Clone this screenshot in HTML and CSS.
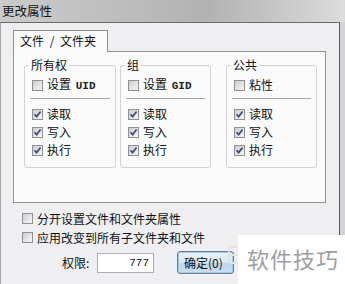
FILE: index.html
```html
<!DOCTYPE html>
<html>
<head>
<meta charset="utf-8">
<link rel="stylesheet" href="styles.css">
</head>
<body>
<div class="screen">
  <div class="titlebar">更改属性</div>
  <div class="window">
    <div class="tabs"><div class="tab">文件 / 文件夹</div></div>
    <div class="panel">
      <fieldset class="group g1">
        <legend>所有权</legend>
        <div class="row"><span class="cb"></span><span>设置 <span class="mono">UID</span></span></div>
        <div class="sep"></div>
        <div class="row"><span class="cb"><svg viewBox="0 0 9 9"><path d="M1.5 4.2 L3.6 6.6 L7.6 1.4"/></svg></span>读取</div>
        <div class="row"><span class="cb"><svg viewBox="0 0 9 9"><path d="M1.5 4.2 L3.6 6.6 L7.6 1.4"/></svg></span>写入</div>
        <div class="row"><span class="cb"><svg viewBox="0 0 9 9"><path d="M1.5 4.2 L3.6 6.6 L7.6 1.4"/></svg></span>执行</div>
      </fieldset>
      <fieldset class="group g2">
        <legend>组</legend>
        <div class="row"><span class="cb"></span><span>设置 <span class="mono">GID</span></span></div>
        <div class="sep"></div>
        <div class="row"><span class="cb"><svg viewBox="0 0 9 9"><path d="M1.5 4.2 L3.6 6.6 L7.6 1.4"/></svg></span>读取</div>
        <div class="row"><span class="cb"><svg viewBox="0 0 9 9"><path d="M1.5 4.2 L3.6 6.6 L7.6 1.4"/></svg></span>写入</div>
        <div class="row"><span class="cb"><svg viewBox="0 0 9 9"><path d="M1.5 4.2 L3.6 6.6 L7.6 1.4"/></svg></span>执行</div>
      </fieldset>
      <fieldset class="group g3">
        <legend>公共</legend>
        <div class="row"><span class="cb"></span><span>粘性</span></div>
        <div class="sep"></div>
        <div class="row"><span class="cb"><svg viewBox="0 0 9 9"><path d="M1.5 4.2 L3.6 6.6 L7.6 1.4"/></svg></span>读取</div>
        <div class="row"><span class="cb"><svg viewBox="0 0 9 9"><path d="M1.5 4.2 L3.6 6.6 L7.6 1.4"/></svg></span>写入</div>
        <div class="row"><span class="cb"><svg viewBox="0 0 9 9"><path d="M1.5 4.2 L3.6 6.6 L7.6 1.4"/></svg></span>执行</div>
      </fieldset>
    </div>
    <div class="opts">
      <div class="orow"><span class="cb"></span>分开设置文件和文件夹属性</div>
      <div class="orow"><span class="cb"></span>应用改变到所有子文件夹和文件</div>
    </div>
    <div class="perm">
      <span class="plabel">权限:</span>
      <div class="pinput">777</div>
      <div class="btn">确定(0)</div>
    </div>
  </div>
  <div class="watermark">
    <svg class="wlogo" viewBox="0 0 14 20"><rect x="1" y="2" width="11" height="16" rx="2" fill="none" stroke="#e2e2e2" stroke-width="2"/><path d="M1 10 H11" stroke="#e2e2e2" stroke-width="2"/></svg>
    <span class="wtext">软件技巧</span>
  </div>
</div>
</body>
</html>
```

FILE: styles.css
```css
* { box-sizing: border-box; }
html, body { margin: 0; padding: 0; }
body {
  font-family: "Noto Sans CJK SC", "Noto Sans", sans-serif;
  font-size: 12px;
  color: #111;
  background: #d6d6d6;
}
.screen {
  position: relative;
  width: 345px;
  height: 284px;
  overflow: hidden;
  background: #d4d4d6;
}
.titlebar {
  height: 22px;
  line-height: 21px;
  padding-left: 2px;
  font-size: 12.5px;
  color: #151515;
  background: linear-gradient(to right, #cbcbcb 0%, #bdbdbd 35%, #b2b2b2 60%, #c6c6c6 80%, #dcdcdc 100%);
}
.window {
  width: 340px;
  height: 262px;
  background: #efeef1;
  border-top: 1px solid #6b6b6b;
  border-right: 1px solid #5c5c5c;
  border-left: 1px solid #a9a9ab;
}
.tabs {
  display: flex;
  padding: 7px 0 0 12px;
}
.tab {
  position: relative;
  z-index: 1;
  width: 95px;
  height: 22px;
  margin-bottom: -1px;
  padding-left: 6px;
  line-height: 19px;
  border: 1px solid #8e8e8e;
  border-bottom: none;
  background: #fbfbfc;
  font-size: 12px;
  word-spacing: 3px;
  white-space: pre;
}
.panel {
  display: flex;
  align-items: flex-start;
  width: 313px;
  height: 152px;
  margin-left: 12px;
  padding: 6px 0 0 10px;
  border: 1px solid #939393;
  background: #fbfbfc;
}
.group {
  margin: 0;
  padding: 0 0 8px 0;
  border: 1px solid #d2d2d4;
  border-radius: 3px;
  min-width: 0;
}
.group legend {
  margin-left: 4px;
  padding: 0 2px;
  height: 14px;
  line-height: 14px;
  font-size: 12px;
}
.g1 { width: 92px; margin-right: 4px; }
.g2 { width: 91px; margin-right: 15px; }
.g3 { width: 91px; }
.row {
  display: flex;
  align-items: center;
  gap: 4px;
  height: 18px;
  padding-left: 7px;
  line-height: 18px;
  white-space: nowrap;
}
.group .row:first-of-type { margin-top: 4px; }
.mono {
  font-family: "Liberation Mono", monospace;
  font-size: 11px;
  font-weight: bold;
  color: #222;
  margin-left: 2px;
}
.sep {
  height: 1px;
  margin: 4px 5px 6px 5px;
  background: #a4a4a6;
}
.cb {
  flex: none;
  display: flex;
  align-items: center;
  justify-content: center;
  width: 11px;
  height: 11px;
  border: 1px solid #909092;
  background: linear-gradient(135deg, #cdcdcf 0%, #e6e6e8 60%, #f6f6f7 100%);
}
.cb svg {
  width: 9px;
  height: 9px;
  display: block;
}
.cb path {
  fill: none;
  stroke: #3a4b7a;
  stroke-width: 1.7;
}
.opts {
  display: flex;
  flex-direction: column;
  padding: 6px 0 0 21px;
}
.orow {
  display: flex;
  align-items: center;
  gap: 4px;
  height: 19px;
  line-height: 19px;
  white-space: nowrap;
}
.perm {
  display: flex;
  align-items: center;
  height: 23px;
  margin-top: 4px;
  padding-left: 61px;
}
.plabel {
  width: 35px;
  font-size: 12px;
}
.pinput {
  width: 57px;
  height: 20px;
  padding-right: 4px;
  text-align: right;
  line-height: 18px;
  font-family: "Liberation Mono", monospace;
  font-size: 11px;
  background: #fff;
  border: 1px solid #abadb3;
}
.btn {
  width: 57px;
  height: 23px;
  margin-left: 23px;
  padding-left: 6px;
  line-height: 21px;
  font-size: 12px;
  border: 1px solid #6f7c8c;
  border-radius: 3px;
  background: linear-gradient(to bottom, #eaf3fb 0%, #d5e7f6 50%, #bcd6ee 52%, #c9e0f3 100%);
  box-shadow: inset 0 0 0 1px #9ccbe9;
}
.watermark {
  position: absolute;
  left: 228px;
  top: 235px;
  display: flex;
  align-items: center;
  height: 49px;
}
.wlogo {
  width: 14px;
  height: 20px;
  margin-right: -4px;
  margin-top: -10px;
}
.wtext {
  height: 49px;
  width: 107px;
  padding-left: 9px;
  background: #fff;
  color: #9e9e9e;
  font-size: 22px;
  line-height: 46px;
  letter-spacing: 1px;
}
```
